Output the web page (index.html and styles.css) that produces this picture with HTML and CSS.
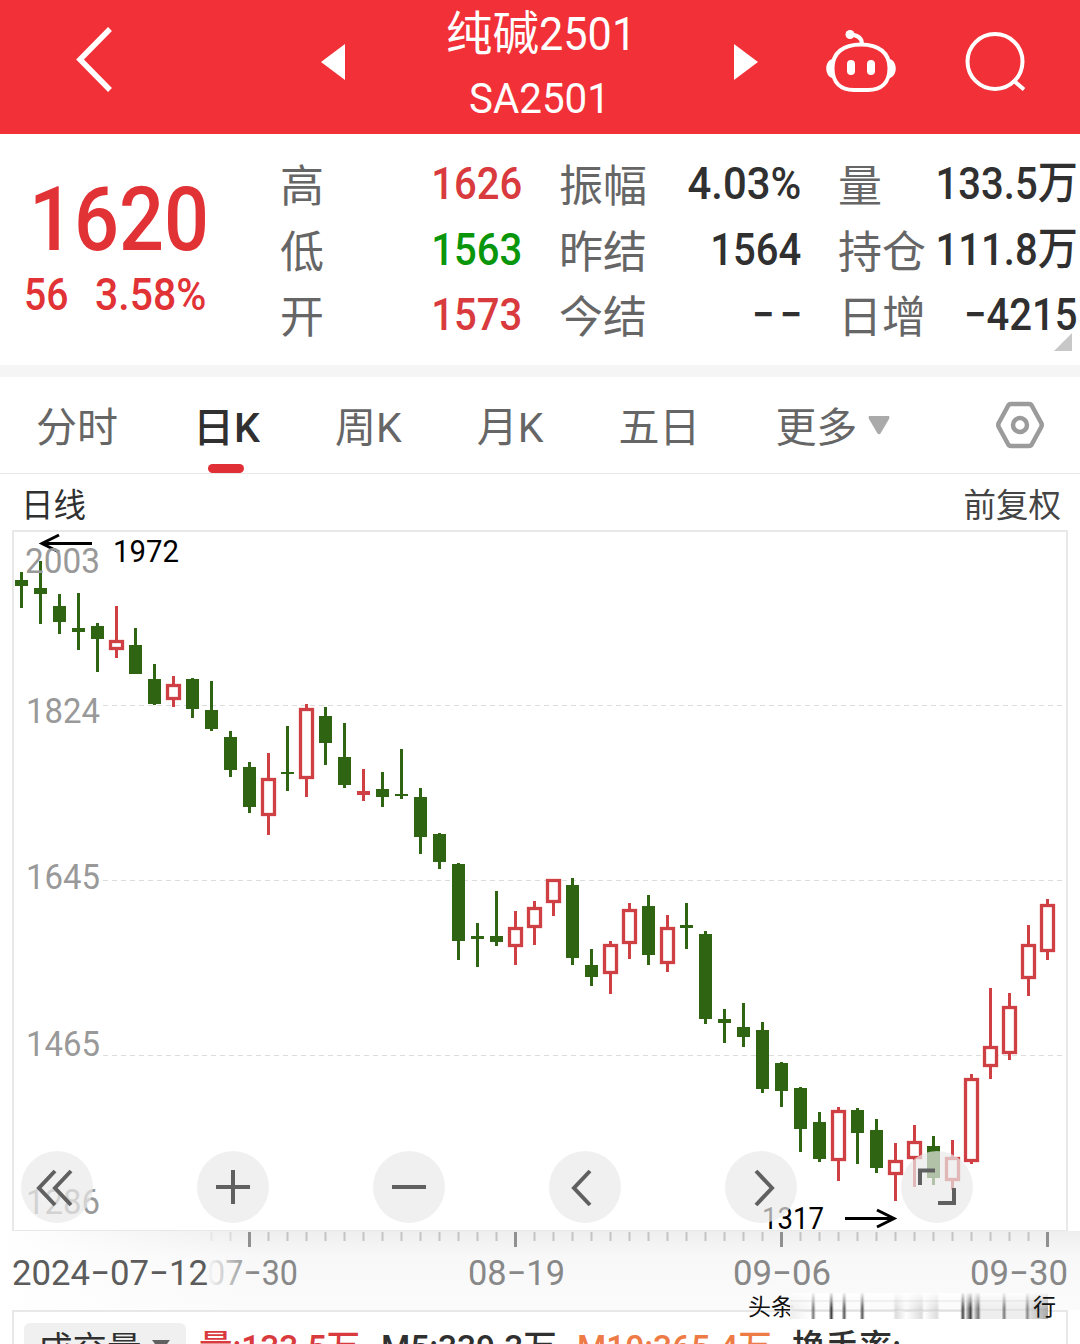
FILE: index.html
```
<!DOCTYPE html>
<html lang="zh-CN">
<head>
  <meta charset="UTF-8">
  <title>纯碱2501</title>
  <link rel="stylesheet" href="styles.css">
</head>
<body>
  <header class="topbar">
    <svg class="back" width="44" height="70" viewBox="0 0 44 70"><path d="M39 4 L9 34.500 L39 65"/></svg>
    <svg class="prev" width="24" height="36" viewBox="0 0 24 36"><path d="M24 0 V36 L0 18 Z"/></svg>
    <div class="title">
      <div class="name">纯碱<span class="num">2501</span></div>
      <div class="code"><span class="num">SA2501</span></div>
    </div>
    <svg class="next" width="24" height="36" viewBox="0 0 24 36"><path d="M0 0 V36 L24 18 Z"/></svg>
    <svg class="robot" width="72" height="66" viewBox="0 0 72 66">
      <path class="line" d="M36 15.500 C54 15.500 64.500 24 64.500 39 C64.500 54 56 61 43 61 H29 C16 61 7.500 54 7.500 39 C7.500 24 18 15.500 36 15.500 Z"/>
      <path class="line" d="M37 15 C37 9 33 6 25 5.500"/>
      <circle cx="25" cy="5.500" r="4.500"/>
      <path d="M8 30 C-1 31 -1 48 8 49 Z M64 30 C73 31 73 48 64 49 Z"/>
      <rect x="22" y="31" width="8" height="15" rx="4"/>
      <rect x="42" y="31" width="8" height="15" rx="4"/>
    </svg>
    <svg class="search" width="64" height="64" viewBox="0 0 64 64"><circle cx="31" cy="30.500" r="27.500"/><path d="M49 49 L60 58.500"/></svg>
  </header>

  <section class="quote">
    <div class="price">
      <div class="last"><span class="num">1620</span></div>
      <div class="change"><span class="num">56</span><span class="num percent">3.58%</span></div>
    </div>
    <div class="stats">
      <div class="stat"><span>高</span><b class="num up">1626</b></div>
      <div class="stat"><span>振幅</span><b class="num percent">4.03%</b></div>
      <div class="stat"><span>量</span><b class="num">133.5万</b></div>
      <div class="stat"><span>低</span><b class="num down">1563</b></div>
      <div class="stat"><span>昨结</span><b class="num">1564</b></div>
      <div class="stat"><span>持仓</span><b class="num">111.8万</b></div>
      <div class="stat"><span>开</span><b class="num up">1573</b></div>
      <div class="stat"><span>今结</span><b class="num dashes">−−</b></div>
      <div class="stat"><span>日增</span><b class="num">−4215</b></div>
    </div>
    <i class="corner"></i>
  </section>

  <nav class="tabs">
    <span class="tab">分时</span>
    <span class="tab active">日K</span>
    <span class="tab">周K</span>
    <span class="tab">月K</span>
    <span class="tab">五日</span>
    <span class="tab more">更多<svg width="22" height="19" viewBox="0 0 22 19"><path d="M1 0 H21 Q22 1 21 3 L12.500 17.500 Q11 19 9.500 17.500 L1 3 Q0 1 1 0 Z"/></svg></span>
    <svg class="settings" width="50" height="48" viewBox="0 0 50 48">
      <path d="M16 3 H34 Q36 3 37 5 L46 21.500 Q47.500 24 46 26.500 L37 43 Q36 45 34 45 H16 Q14 45 13 43 L4 26.500 Q2.500 24 4 21.500 L13 5 Q14 3 16 3 Z"/>
      <circle cx="25" cy="24" r="7"/>
    </svg>
  </nav>

  <div class="chart-head"><span class="period">日线</span><span>前复权</span></div>

  <section class="chart">
    <svg id="kline" width="1080" height="701" viewBox="0 530 1080 701">
      <rect class="frame" x="13" y="531" width="1054" height="700"/>
      <path class="grid" d="M103 705.500 H1066 M103 880.500 H1066 M103 1055.500 H1066"/>
      <path class="arrow" d="M92 543.500 H42 M59 535 L42 543.500 L59 552"/>
      <text class="mark" x="113" y="562" textLength="66" lengthAdjust="spacingAndGlyphs">1972</text>
      <g id="candles"></g>
      <g class="scale">
        <text x="25" y="573" textLength="75" lengthAdjust="spacingAndGlyphs">2003</text>
        <text x="26" y="723" textLength="74" lengthAdjust="spacingAndGlyphs">1824</text>
        <text x="26" y="889" textLength="74" lengthAdjust="spacingAndGlyphs">1645</text>
        <text x="26" y="1056" textLength="74" lengthAdjust="spacingAndGlyphs">1465</text>
        <text x="26" y="1214" textLength="74" lengthAdjust="spacingAndGlyphs">1286</text>
      </g>
      <text class="mark" x="762" y="1228.500" textLength="62" lengthAdjust="spacingAndGlyphs">1317</text>
      <path class="arrow" d="M845 1218.500 H894 M877 1210 L894 1218.500 L877 1227"/>
    </svg>
    <div class="controls">
      <button><svg viewBox="0 0 72 72"><path d="M34 20 L18 37 L34 54 M50 20 L34 37 L50 54"/></svg></button>
      <button><svg viewBox="0 0 72 72"><path d="M19 36 H53 M36 19 V53"/></svg></button>
      <button><svg viewBox="0 0 72 72"><path d="M19 36 H53"/></svg></button>
      <button><svg viewBox="0 0 72 72"><path d="M41 20 L25 37 L41 54"/></svg></button>
      <button><svg viewBox="0 0 72 72"><path d="M31 20 L47 37 L31 54"/></svg></button>
      <button><svg viewBox="0 0 72 72"><path d="M19 34 V19.500 H34 M37 52 H53 V37"/></svg></button>
    </div>
  </section>

  <section class="axis">
    <svg id="ticks" width="1080" height="79" viewBox="0 0 1080 79">
      <defs>
        <linearGradient id="fade" x1="0" x2="1" y1="0" y2="0">
          <stop offset="0" stop-color="#888" stop-opacity="0"/>
          <stop offset="0.500" stop-color="#888"/>
        </linearGradient>
      </defs>
      <g id="tick-lines"></g>
      <g class="dates">
        <text x="207" y="54" textLength="91" lengthAdjust="spacingAndGlyphs">07−30</text>
        <text x="468" y="54" textLength="97" lengthAdjust="spacingAndGlyphs">08−19</text>
        <text x="733" y="54" textLength="98" lengthAdjust="spacingAndGlyphs">09−06</text>
        <text x="970" y="54" textLength="98" lengthAdjust="spacingAndGlyphs">09−30</text>
        <text class="start" x="12" y="54" textLength="196" lengthAdjust="spacingAndGlyphs">2024−07−12</text>
      </g>
    </svg>
    <div class="watermark"><span>头条</span><i></i><span class="tail">行</span></div>
  </section>

  <section class="volume">
    <span class="pill">成交量<i></i></span>
    <span class="num vol">量:133.5万</span>
    <span class="num m5">M5:339.3万</span>
    <span class="num m10">M10:365.4万</span>
    <span class="num rate">换手率:</span>
  </section>

  <script src="chart.js"></script>
</body>
</html>
```
FILE: styles.css
```
:root {
  --red: #f13038;
  --up: #d93a3d;
  --down: #0a960a;
  --text: #303030;
  --muted: #666;
  --line: #e8e8e8;
}

* {
  box-sizing: border-box;
}

body {
  margin: 0;
  width: 1080px;
  height: 1344px;
  overflow: hidden;
  background: #fff;
  color: var(--text);
  font-family: "Roboto", "Noto Sans CJK SC", sans-serif;
}

.num {
  display: inline-block;
  font-weight: 500;
  white-space: nowrap;
  transform: scaleX(0.89);
  transform-origin: left center;
}

.num.percent {
  transform: scaleX(0.93);
}

/* top bar */
.topbar {
  display: flex;
  height: 134px;
  background: var(--red);
  color: #fff;
}

.topbar svg {
  flex: none;
  fill: #fff;
}

.topbar .back {
  margin: 25px 0 0 71px;
  fill: none;
  stroke: #fff;
  stroke-width: 5.500;
}

.topbar .prev {
  margin: 44px 0 0 206px;
}

.title {
  width: 389px;
  padding-top: 1px;
}

.name {
  height: 66px;
  padding-left: 101px;
  font-size: 46.500px;
  line-height: 66px;
  white-space: nowrap;
}

.name .num,
.code .num {
  font-weight: 400;
  transform: scaleX(0.93);
}

.code {
  padding-left: 124px;
  font-size: 42px;
  line-height: 64px;
}

.code .num {
  transform: scaleX(0.96);
}

.topbar .next {
  margin-top: 44px;
}

.topbar .robot {
  margin: 29px 0 0 67px;
}

.robot .line {
  fill: none;
  stroke: #fff;
  stroke-width: 4;
}

.topbar .search {
  margin: 31px 0 0 67px;
  fill: none;
  stroke: #fff;
  stroke-width: 4;
}

/* quote */
.quote {
  position: relative;
  display: flex;
  height: 243px;
  border-bottom: 12px solid #f5f5f5;
}

.price {
  width: 280px;
  color: #e13236;
}

.last {
  height: 126px;
  padding: 33px 0 0 29px;
  font-size: 89px;
  line-height: 105px;
}

.change {
  display: flex;
  padding: 9px 0 0 24px;
  font-size: 44px;
  line-height: 52px;
}

.change .num + .num {
  margin-left: 21px;
}

.stats {
  display: grid;
  grid-template-columns: 242px 242px 240px;
  grid-auto-rows: 65.500px;
  column-gap: 37px;
  padding-top: 17px;
}

.stat {
  display: flex;
  justify-content: space-between;
  color: var(--muted);
  font-size: 44px;
  line-height: 66px;
  white-space: nowrap;
}

.stat > span {
  padding-top: 3px;
}

.stat .num {
  margin-left: -30px;
  color: var(--text);
  font-size: 45px;
  transform-origin: right center;
}

.stat .up {
  color: var(--up);
}

.stat .down {
  color: var(--down);
}

.stat .dashes {
  margin-right: -7px;
  letter-spacing: 6px;
}

.corner {
  position: absolute;
  right: 8px;
  bottom: 14px;
  border-left: 18px solid transparent;
  border-bottom: 18px solid #c8c8c8;
}

/* tabs */
.tabs {
  display: flex;
  height: 97px;
  border-bottom: 1px solid var(--line);
  color: var(--muted);
  font-size: 41px;
  line-height: 102px;
}

.tab {
  flex: none;
  height: 96px;
  white-space: nowrap;
  margin-left: 75px;
}

.tab:first-child {
  margin-left: 36px;
}

.tab.active {
  position: relative;
  color: var(--text);
  font-weight: 500;
}

.tab.active::after {
  content: "";
  position: absolute;
  left: 15px;
  bottom: 0;
  width: 36px;
  height: 9px;
  border-radius: 5px;
  background: #e03035;
}

.tab.more svg {
  margin-left: 11px;
  fill: #aaa;
  vertical-align: 7px;
}

.settings {
  margin: 24px 35px 0 auto;
  fill: none;
  stroke: #9b9b9b;
  stroke-width: 4.500;
}

/* chart */
.chart-head {
  display: flex;
  justify-content: space-between;
  height: 56px;
  padding: 0 19px 0 21px;
  color: #444;
  font-size: 32.500px;
  line-height: 64px;
}

.period {
  color: var(--text);
}

.chart {
  position: relative;
  height: 701px;
}

.chart > svg,
.axis > svg {
  display: block;
}

.frame {
  fill: none;
  stroke: var(--line);
  stroke-width: 2;
}

.grid {
  stroke: #dcdcdc;
  stroke-dasharray: 5 4;
}

.arrow {
  fill: none;
  stroke: #000;
  stroke-width: 3;
}

.mark {
  font-size: 31px;
}

.scale text {
  fill: #999;
  font-size: 35px;
}

.green {
  fill: #2f6413;
}

.red {
  fill: #cf4044;
}

.hollow {
  fill: #fff;
  stroke: #cf4044;
  stroke-width: 3.300;
}

.controls {
  position: absolute;
  left: 21px;
  top: 621px;
  display: flex;
  gap: 104px;
}

.controls button {
  width: 72px;
  height: 72px;
  padding: 0;
  border: none;
  border-radius: 50%;
  background: rgba(233, 233, 233, 0.700);
}

.controls svg {
  display: block;
  fill: none;
  stroke: #606060;
  stroke-width: 4;
}

/* date axis */
.axis {
  position: relative;
  height: 79px;
  background:
    linear-gradient(90deg, #fff 0, rgba(255, 255, 255, 0) 260px),
    linear-gradient(#eee, #f8f8f8 25px, #fbfbfb);
}

.dates text {
  fill: #888;
  font-size: 35px;
}

.dates text:first-child {
  fill: url(#fade);
}

.dates .start {
  fill: #5c5c5c;
}

.watermark {
  position: absolute;
  left: 748px;
  top: 58px;
  z-index: 1;
  display: flex;
  width: 308px;
  height: 32px;
  overflow: hidden;
  color: #111;
  font: 23px/32px "Noto Sans CJK SC", sans-serif;
}

.watermark i {
  flex: 1;
  margin: 4px -4px 2px;
  background:
    linear-gradient(rgba(255, 255, 255, 0.900), rgba(255, 255, 255, 0) 60%),
    linear-gradient(transparent 25%, rgba(120, 120, 120, 0.250) 30%, transparent 36%, transparent 60%, rgba(120, 120, 120, 0.150) 65%, transparent 70%),
    linear-gradient(90deg, #eee, transparent 8%, #777 9%, transparent 10%, transparent 15%, #333 16%, transparent 17%, transparent 20%, #555 21%, transparent 22%, transparent 27%, #555 28%, transparent 29%, transparent 40%, #ddd 41%, #eee 43%, transparent 45%, #ddd 51%, transparent 52%, #ddd 57%, transparent 58%, transparent 66%, #444 67%, #eee 68%, #444 70%, #eee 71%, #777 73%, #eee 74%, #eee 82%, #777 83%, #eee 84%, #eee 91%, #888 92%, #ddd 93%, #aaa 100%);
}

.watermark .tail {
  width: 12px;
  direction: rtl;
}

/* volume */
.volume {
  display: flex;
  height: 60px;
  margin: 0 12px;
  padding: 11px 0 0 10px;
  border: 2px solid var(--line);
  font-size: 35px;
  line-height: 52px;
  white-space: nowrap;
}

.volume > span {
  flex: none;
}

.volume .num {
  transform: scaleX(0.955);
}

.pill {
  display: flex;
  width: 162px;
  height: 52px;
  padding-left: 14px;
  border-radius: 6px;
  background: #f0f0f0;
  font-size: 34.500px;
}

.pill i {
  margin: 17px 0 0 10px;
  border: 9px solid transparent;
  border-top: 12px solid #606060;
}

.vol {
  width: 160px;
  margin-left: 13px;
  color: var(--up);
}

.m5 {
  width: 174px;
  margin-left: 22px;
}

.m10 {
  width: 193px;
  margin-left: 22px;
  color: #ee7a45;
}

.rate {
  margin-left: 22px;
}
```
FILE: chart.js
```
// [up, high, body top, body bottom, low]
const candles = [
  [0, 572, 580, 586, 608], [0, 561, 588, 594, 624], [0, 594, 606, 622, 634],
  [0, 593, 628, 632, 650], [0, 623, 626, 639, 672], [1, 606, 640, 650, 658],
  [0, 628, 645, 674, 674], [0, 664, 679, 704, 705], [1, 676, 684, 700, 707],
  [0, 678, 679, 709, 718], [0, 681, 710, 729, 731], [0, 731, 737, 770, 777],
  [0, 762, 767, 807, 813], [1, 753, 778, 816, 835], [0, 726, 772, 774, 791],
  [1, 704, 708, 779, 797], [0, 707, 716, 743, 765], [0, 723, 757, 785, 788],
  [1, 769, 791, 795, 801], [0, 772, 789, 797, 807], [0, 749, 794, 796, 799],
  [0, 788, 797, 837, 854], [0, 833, 834, 862, 869], [0, 863, 864, 941, 960],
  [0, 923, 936, 939, 967], [0, 891, 936, 942, 946], [1, 911, 927, 947, 965],
  [1, 901, 907, 928, 945], [1, 879, 879, 903, 916], [0, 878, 885, 958, 965],
  [0, 949, 965, 977, 986], [1, 941, 944, 974, 994], [1, 903, 909, 944, 959],
  [0, 895, 906, 955, 965], [1, 915, 927, 964, 972], [0, 903, 925, 928, 949],
  [0, 931, 934, 1019, 1024], [0, 1009, 1019, 1023, 1043], [0, 1003, 1027, 1037, 1047],
  [0, 1022, 1030, 1089, 1093], [0, 1062, 1063, 1091, 1107], [0, 1087, 1088, 1129, 1152],
  [0, 1112, 1122, 1159, 1162], [1, 1107, 1110, 1161, 1181], [0, 1108, 1110, 1133, 1164],
  [0, 1119, 1130, 1168, 1173], [1, 1143, 1160, 1175, 1201], [1, 1125, 1141, 1159, 1187],
  [0, 1136, 1146, 1178, 1185], [1, 1140, 1157, 1181, 1190], [1, 1074, 1078, 1162, 1164],
  [1, 988, 1046, 1067, 1079], [1, 993, 1006, 1054, 1060], [1, 925, 944, 979, 996],
  [1, 899, 904, 952, 960]
];

const step = 19;
const firstX = 21.5;

function addRect(parent, cls, x, y, width, height) {
  const rect = document.createElementNS('http://www.w3.org/2000/svg', 'rect');
  rect.setAttribute('class', cls);
  rect.setAttribute('x', x);
  rect.setAttribute('y', y);
  rect.setAttribute('width', width);
  rect.setAttribute('height', height);
  parent.appendChild(rect);
  return rect;
}

const group = document.getElementById('candles');
candles.forEach(([up, high, top, bottom, low], i) => {
  const x = firstX + i * step;
  const cls = up ? 'red' : 'green';
  addRect(group, cls, x - 1.5, high, 3, low - high);
  if (up && bottom - top > 5) {
    addRect(group, 'hollow', x - 6, top + 1.5, 12, bottom - top - 3);
  } else {
    addRect(group, cls, x - 6.5, top, 13, bottom - top);
  }
});

// one tick per candle, a long one under each date
const ticks = document.getElementById('tick-lines');
for (let i = 10; i < candles.length; i++) {
  const x = firstX + i * step;
  const major = (i - 12) % 14 === 0;
  const tick = addRect(ticks, 'tick', x - (major ? 1.5 : 1), 1, major ? 3 : 2, major ? 15 : 9);
  tick.setAttribute('fill', major ? '#909090' : '#c4c4c4');
  if (i < 12) tick.setAttribute('opacity', (i - 9) * 0.25);
}
```
